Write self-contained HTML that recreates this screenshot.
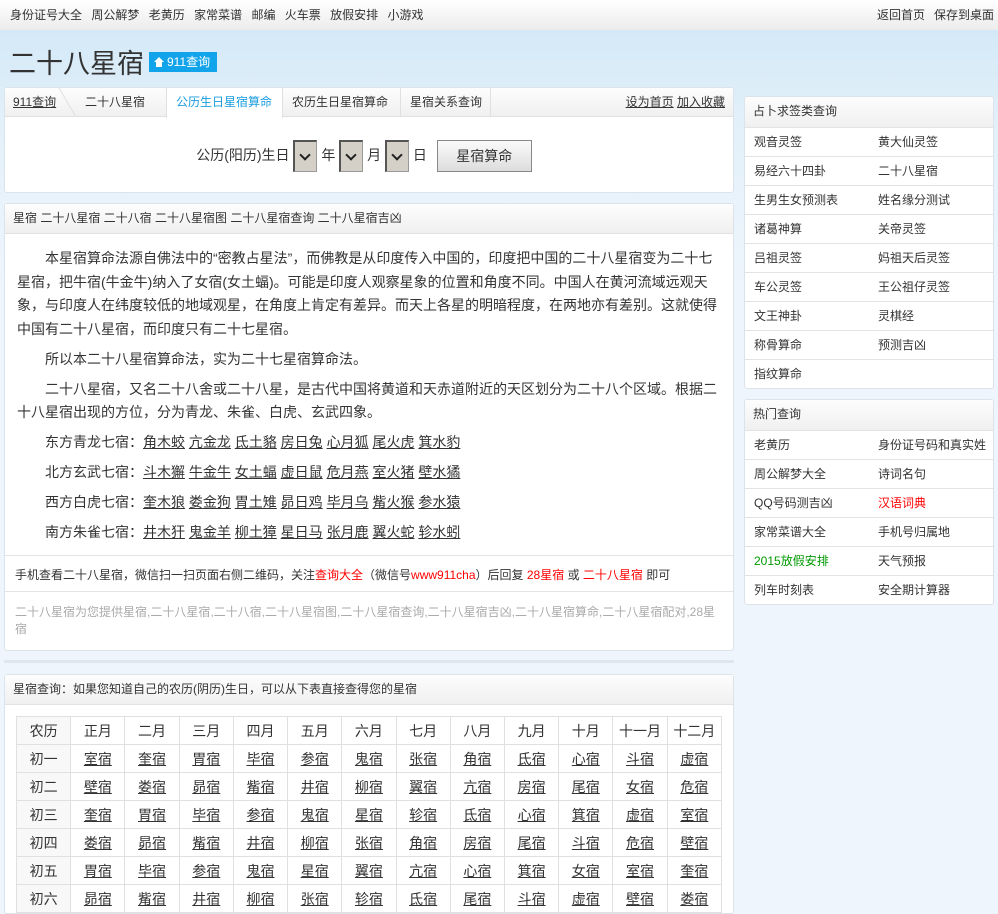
<!DOCTYPE html>
<html><head><meta charset="utf-8">
<style>
*{margin:0;padding:0;box-sizing:border-box}
body{width:998px;height:907px;overflow:hidden;font-family:"Liberation Sans","Noto Sans CJK SC",sans-serif;font-size:12px;color:#333;background:#eef5fc;position:relative}
a{color:#333;text-decoration:none}
.sky{position:absolute;left:0;top:30px;width:998px;height:260px;background:linear-gradient(180deg,#d4e9f7 0%,#e4f1fa 40%,#eef5fc 100%)}
.top{position:absolute;left:0;top:0;width:998px;height:30px;background:linear-gradient(#fff,#ececec);line-height:30px;font-size:12px}
.top .l{position:absolute;left:10px}
.top .l a{margin-right:6px}
.top .r{position:absolute;right:4px}
.top .r a{margin-left:9px}
h1{position:absolute;left:9px;top:42px;font-size:27px;font-weight:normal;color:#333}
.badge{position:absolute;left:149px;top:52px;width:68px;height:20px;background:#12a4ea;color:#fff;font-size:12px;line-height:20px;padding-left:18px}
.badge i{position:absolute;left:5px;top:5px;width:0;height:0;border-left:5px solid transparent;border-right:5px solid transparent;border-bottom:5px solid #fff}
.badge b{position:absolute;left:7px;top:10px;width:6px;height:5px;background:#fff}
.panel{position:absolute;background:#fff;border:1px solid #dde3ea;border-radius:3px}
.ph{height:30px;line-height:29px;background:linear-gradient(#fdfdfd,#f0f0f0);border-bottom:1px solid #e2e2e2;padding-left:8px;font-size:12px}
.tabs{height:29px;line-height:28px;background:linear-gradient(#fdfdfd,#f0f0f0);border-bottom:1px solid #e0e0e0;position:relative}
.tabs span{position:absolute;top:0;height:29px}
.body{font-size:14px;line-height:23.5px;padding:13px 12px 0 12px;color:#333}
.body p{text-indent:2em;margin-bottom:6.5px}
.body u{text-decoration:underline}
.sel{display:inline-block;width:24px;height:32px;border:1px solid #999;border-top:2px solid #555;border-left:2px solid #555;background:#d4d0c8;vertical-align:middle;position:relative}
.sel:after{content:"";position:absolute;left:6px;top:9px;width:6px;height:6px;border-right:2px solid #222;border-bottom:2px solid #222;transform:rotate(45deg)}
.btn{display:inline-block;width:95px;height:32px;border:1px solid #888;background:linear-gradient(#fafafa,#ddd);font-size:14px;line-height:30px;text-align:center;vertical-align:middle;margin-left:6px}
.rt{width:100%;border-collapse:collapse}
.rt td{height:29px;line-height:28px;border-top:1px solid #e3e3e3;font-size:12px;padding-left:9px;width:50%}
table.x{position:absolute;left:11px;top:41px;border-collapse:collapse;font-size:14px;table-layout:fixed;width:706px}
table.x td{border:1px solid #e0e0e0;height:28px;text-align:center;padding:0;white-space:nowrap}
table.x td u{text-decoration:underline}
table.x tr td:first-child{background:#f8f8f8}
</style></head><body>
<div class="sky"></div>
<div class="top"><div class="l"><a>身份证号大全</a> <a>周公解梦</a> <a>老黄历</a> <a>家常菜谱</a> <a>邮编</a> <a>火车票</a> <a>放假安排</a> <a>小游戏</a></div><div class="r"><a>返回首页</a><a>保存到桌面</a></div></div>
<h1>二十八星宿</h1>
<div class="badge"><i></i><b></b>911查询</div>

<div class="panel" style="left:4px;top:87px;width:730px;height:106px">
<div class="tabs">
<span style="left:8px"><u>911查询</u></span>
<span style="left:62px;width:1px;background:#ddd;transform:skewX(30deg)"></span>
<span style="left:80px">二十八星宿</span>
<span style="left:161px;width:117px;background:#fff;height:30px;border-left:1px solid #e0e0e0;border-right:1px solid #e0e0e0;color:#1a9ce0;padding-left:9px">公历生日星宿算命</span>
<span style="left:287px">农历生日星宿算命</span>
<span style="left:395px;width:1px;background:#e0e0e0"></span>
<span style="left:405px">星宿关系查询</span>
<span style="left:485px;width:1px;background:#e0e0e0"></span>
<span style="right:8px"><u>设为首页</u> <u>加入收藏</u></span>
</div>
<div style="position:absolute;left:-6px;top:50px;width:730px;text-align:center;font-size:14px;line-height:34px">公历(阳历)生日 <span class="sel"></span> 年 <span class="sel"></span> 月 <span class="sel"></span> 日 <span class="btn">星宿算命</span></div>
</div>

<div class="panel" style="left:4px;top:203px;width:730px;height:448px">
<div class="ph">星宿 二十八星宿 二十八宿 二十八星宿图 二十八星宿查询 二十八星宿吉凶</div>
<div class="body">
<p>本星宿算命法源自佛法中的“密教占星法”，而佛教是从印度传入中国的，印度把中国的二十八星宿变为二十七星宿，把牛宿(牛金牛)纳入了女宿(女土蝠)。可能是印度人观察星象的位置和角度不同。中国人在黄河流域远观天象，与印度人在纬度较低的地域观星，在角度上肯定有差异。而天上各星的明暗程度，在两地亦有差别。这就使得中国有二十八星宿，而印度只有二十七星宿。</p>
<p>所以本二十八星宿算命法，实为二十七星宿算命法。</p>
<p>二十八星宿，又名二十八舍或二十八星，是古代中国将黄道和天赤道附近的天区划分为二十八个区域。根据二十八星宿出现的方位，分为青龙、朱雀、白虎、玄武四象。</p>
<p>东方青龙七宿：<u>角木蛟</u> <u>亢金龙</u> <u>氐土貉</u> <u>房日兔</u> <u>心月狐</u> <u>尾火虎</u> <u>箕水豹</u></p>
<p>北方玄武七宿：<u>斗木獬</u> <u>牛金牛</u> <u>女土蝠</u> <u>虚日鼠</u> <u>危月燕</u> <u>室火猪</u> <u>壁水獝</u></p>
<p>西方白虎七宿：<u>奎木狼</u> <u>娄金狗</u> <u>胃土雉</u> <u>昴日鸡</u> <u>毕月乌</u> <u>觜火猴</u> <u>参水猿</u></p>
<p>南方朱雀七宿：<u>井木犴</u> <u>鬼金羊</u> <u>柳土獐</u> <u>星日马</u> <u>张月鹿</u> <u>翼火蛇</u> <u>轸水蚓</u></p>
</div>
<div style="position:absolute;left:0;top:351px;width:728px;height:36px;border-top:1px solid #e3e3e3;line-height:38px;padding-left:10px;font-size:12px">手机查看二十八星宿，微信扫一扫页面右侧二维码，关注<span style="color:#f00">查询大全</span>（微信号<span style="color:#f00">www911cha</span>）后回复 <span style="color:#f00">28星宿</span> 或 <span style="color:#f00">二十八星宿</span> 即可</div>
<div style="position:absolute;left:0;top:387px;width:728px;border-top:1px solid #e3e3e3;padding:12px 10px 0;line-height:17px;font-size:12px;color:#aaa">二十八星宿为您提供星宿,二十八星宿,二十八宿,二十八星宿图,二十八星宿查询,二十八星宿吉凶,二十八星宿算命,二十八星宿配对,28星宿</div>
</div>
<div style="position:absolute;left:4px;top:660px;width:730px;height:3px;background:#dfe6ee"></div>

<div class="panel" style="left:4px;top:674px;width:730px;height:240px">
<div class="ph">星宿查询：如果您知道自己的农历(阴历)生日，可以从下表直接查得您的星宿</div>
<table class="x">
<tr><td>农历</td><td>正月</td><td>二月</td><td>三月</td><td>四月</td><td>五月</td><td>六月</td><td>七月</td><td>八月</td><td>九月</td><td>十月</td><td>十一月</td><td>十二月</td></tr>
<tr><td>初一</td><td><u>室宿</u></td><td><u>奎宿</u></td><td><u>胃宿</u></td><td><u>毕宿</u></td><td><u>参宿</u></td><td><u>鬼宿</u></td><td><u>张宿</u></td><td><u>角宿</u></td><td><u>氐宿</u></td><td><u>心宿</u></td><td><u>斗宿</u></td><td><u>虚宿</u></td></tr>
<tr><td>初二</td><td><u>壁宿</u></td><td><u>娄宿</u></td><td><u>昴宿</u></td><td><u>觜宿</u></td><td><u>井宿</u></td><td><u>柳宿</u></td><td><u>翼宿</u></td><td><u>亢宿</u></td><td><u>房宿</u></td><td><u>尾宿</u></td><td><u>女宿</u></td><td><u>危宿</u></td></tr>
<tr><td>初三</td><td><u>奎宿</u></td><td><u>胃宿</u></td><td><u>毕宿</u></td><td><u>参宿</u></td><td><u>鬼宿</u></td><td><u>星宿</u></td><td><u>轸宿</u></td><td><u>氐宿</u></td><td><u>心宿</u></td><td><u>箕宿</u></td><td><u>虚宿</u></td><td><u>室宿</u></td></tr>
<tr><td>初四</td><td><u>娄宿</u></td><td><u>昴宿</u></td><td><u>觜宿</u></td><td><u>井宿</u></td><td><u>柳宿</u></td><td><u>张宿</u></td><td><u>角宿</u></td><td><u>房宿</u></td><td><u>尾宿</u></td><td><u>斗宿</u></td><td><u>危宿</u></td><td><u>壁宿</u></td></tr>
<tr><td>初五</td><td><u>胃宿</u></td><td><u>毕宿</u></td><td><u>参宿</u></td><td><u>鬼宿</u></td><td><u>星宿</u></td><td><u>翼宿</u></td><td><u>亢宿</u></td><td><u>心宿</u></td><td><u>箕宿</u></td><td><u>女宿</u></td><td><u>室宿</u></td><td><u>奎宿</u></td></tr>
<tr><td>初六</td><td><u>昴宿</u></td><td><u>觜宿</u></td><td><u>井宿</u></td><td><u>柳宿</u></td><td><u>张宿</u></td><td><u>轸宿</u></td><td><u>氐宿</u></td><td><u>尾宿</u></td><td><u>斗宿</u></td><td><u>虚宿</u></td><td><u>壁宿</u></td><td><u>娄宿</u></td></tr>
</table>
</div>

<div class="panel" style="left:744px;top:96px;width:250px;height:293px;overflow:hidden">
<div class="ph" style="border-bottom:0">占卜求签类查询</div>
<table class="rt">
<tr><td>观音灵签</td><td>黄大仙灵签</td></tr>
<tr><td>易经六十四卦</td><td>二十八星宿</td></tr>
<tr><td>生男生女预测表</td><td>姓名缘分测试</td></tr>
<tr><td>诸葛神算</td><td>关帝灵签</td></tr>
<tr><td>吕祖灵签</td><td>妈祖天后灵签</td></tr>
<tr><td>车公灵签</td><td>王公祖仔灵签</td></tr>
<tr><td>文王神卦</td><td>灵棋经</td></tr>
<tr><td>称骨算命</td><td>预测吉凶</td></tr>
<tr><td>指纹算命</td><td></td></tr>
</table>
</div>

<div class="panel" style="left:744px;top:399px;width:250px;height:206px;overflow:hidden">
<div class="ph" style="border-bottom:0">热门查询</div>
<table class="rt">
<tr><td>老黄历</td><td style="white-space:nowrap">身份证号码和真实姓</td></tr>
<tr><td>周公解梦大全</td><td>诗词名句</td></tr>
<tr><td>QQ号码测吉凶</td><td style="color:#f00">汉语词典</td></tr>
<tr><td>家常菜谱大全</td><td>手机号归属地</td></tr>
<tr><td style="color:#090">2015放假安排</td><td>天气预报</td></tr>
<tr><td>列车时刻表</td><td>安全期计算器</td></tr>
</table>
</div>
</body></html>
